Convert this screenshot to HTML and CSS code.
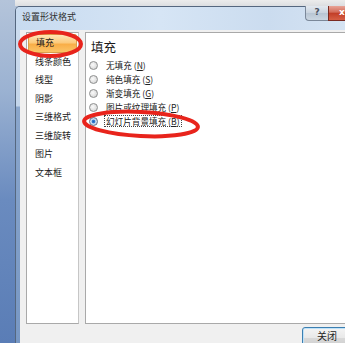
FILE: index.html
```html
<!DOCTYPE html>
<html lang="zh-CN">
<head>
<meta charset="utf-8">
<title>设置形状格式</title>
<link rel="stylesheet" href="styles.css">
</head>
<body>
<div class="screen">
  <div class="top-strip"></div>
  <div class="dialog">
    <div class="titlebar">
      <span class="title">设置形状格式</span>
      <div class="caption-btns">
        <span class="btn-help">?</span>
        <span class="btn-close">x</span>
      </div>
    </div>
    <div class="content">
      <div class="panes">
        <ul class="nav">
          <li class="nav-item selected">填充</li>
          <li class="nav-item">线条颜色</li>
          <li class="nav-item">线型</li>
          <li class="nav-item">阴影</li>
          <li class="nav-item">三维格式</li>
          <li class="nav-item">三维旋转</li>
          <li class="nav-item">图片</li>
          <li class="nav-item">文本框</li>
        </ul>
        <div class="page">
          <div class="heading">填充</div>
          <div class="opt"><span class="radio"></span><span class="lbl">无填充 (<u>N</u>)</span></div>
          <div class="opt"><span class="radio"></span><span class="lbl">纯色填充 (<u>S</u>)</span></div>
          <div class="opt"><span class="radio"></span><span class="lbl">渐变填充 (<u>G</u>)</span></div>
          <div class="opt"><span class="radio"></span><span class="lbl">图片或纹理填充 (<u>P</u>)</span></div>
          <div class="opt"><span class="radio checked"></span><span class="lbl focus">幻灯片背景填充 (<u>B</u>)</span></div>
        </div>
      </div>
      <div class="footer"><span class="btn">关闭</span></div>
    </div>
  </div>
  <svg class="marks" width="345" height="343" viewBox="0 0 345 343">
    <ellipse cx="50.5" cy="44" rx="30.5" ry="12" fill="none" stroke="#e8241c" stroke-width="4"/>
    <ellipse cx="141" cy="124" rx="57" ry="12" fill="none" stroke="#e8241c" stroke-width="4" transform="rotate(3 141 124)"/>
  </svg>
</div>
</body>
</html>
```

FILE: styles.css
```css
* { box-sizing: border-box; }
html, body { margin: 0; padding: 0; }
body {
  width: 345px;
  height: 343px;
  overflow: hidden;
  font-family: "Noto Sans CJK SC", "Noto Sans", sans-serif;
  color: #1e1e1e;
}
.screen {
  position: relative;
  width: 345px;
  height: 343px;
  overflow: hidden;
  background: linear-gradient(to bottom, #b4c4da 0, #9bb2d2 90px, #6a8bbf 200px, #5a7db6 343px);
}
.top-strip {
  height: 6px;
  margin-left: 15px;
  background: linear-gradient(to bottom, #ececec, #dcdee1);
}
.dialog {
  width: 363px;
  height: 360px;
  margin-left: 15px;
  border: 1px solid #55677f;
  border-bottom: none;
  border-radius: 5px 5px 0 0;
  background: linear-gradient(to bottom, #cfdef0 0, #c3d5ea 99px, #8aa6cc 100px, #7797c4 337px);
  display: flex;
  flex-direction: column;
}
.titlebar {
  flex: none;
  height: 23px;
  display: flex;
  align-items: flex-start;
  padding: 4px 13px 0 6px;
  background: linear-gradient(to right, #c8dbf0 0, #d6e5f5 40%, #cbdcef 70%, #d9e6f4 100%);
  border-radius: 4px 4px 0 0;
}
.title {
  font-size: 9px;
  line-height: 12px;
  color: #303030;
}
.caption-btns {
  margin-left: auto;
  margin-top: -5px;
  display: flex;
  height: 15px;
}
.btn-help {
  width: 23px;
  height: 15px;
  border: 1px solid #7b8899;
  border-top: none;
  border-right: none;
  border-radius: 0 0 0 4px;
  background: linear-gradient(to bottom, #e2e8ef, #c9d3de 50%, #b8c5d3 51%, #cbd6e1);
  font-size: 9px;
  line-height: 13px;
  text-align: center;
  color: #4a5260;
  font-family: "DejaVu Sans", sans-serif;
  font-weight: bold;
}
.btn-close {
  width: 36px;
  height: 15px;
  border: 1px solid #7a2b22;
  border-top: none;
  background: linear-gradient(to bottom, #e8a497, #d26a58 45%, #c13d27 50%, #d65f45);
  font-size: 9px;
  line-height: 13px;
  padding-left: 10px;
  color: #fff;
  font-family: "DejaVu Sans", sans-serif;
  font-weight: bold;
}
.content {
  flex: 1;
  margin: 0 4px;
  background: #f0f0f0;
  padding: 2px 0 0 6px;
  display: flex;
  flex-direction: column;
}
.panes {
  flex: none;
  display: flex;
  gap: 6px;
  height: 292px;
  padding-right: 6px;
}
.nav {
  list-style: none;
  margin: 0;
  padding: 1px 0 0 0;
  width: 53px;
  background: #fff;
  border: 1px solid #a9a9a9;
  border-right-color: #c6c6c6;
}
.nav-item {
  height: 18.5px;
  line-height: 18px;
  font-size: 9px;
  padding-left: 8px;
  color: #1a1a1a;
}
.nav-item.selected {
  margin: 0 1px;
  padding-left: 7px;
  border: 1px solid #d9a04a;
  border-radius: 2px;
  background: linear-gradient(to bottom, #fee6b6 0, #fcca7c 45%, #f9ae47 55%, #fbc467 100%);
  line-height: 16px;
}
.page {
  flex: 1;
  background: #fff;
  border: 1px solid #a9a9a9;
  padding-top: 7px;
}
.heading {
  font-size: 12.5px;
  line-height: 14px;
  height: 14px;
  padding-left: 5px;
  margin-bottom: 4px;
  color: #1a1a1a;
}
.opt {
  height: 14px;
  display: flex;
  align-items: center;
  gap: 6px;
  padding-left: 3px;
}
.radio {
  width: 9px;
  height: 9px;
  border-radius: 50%;
  border: 1px solid #8e8f8f;
  background: radial-gradient(circle at 40% 40%, #fafafa 0, #e2e2e2 55%, #c9c9c9 100%);
  flex: none;
}
.radio.checked {
  border-color: #5b6f86;
  background: radial-gradient(circle at 50% 50%, #1d5fb8 0, #3d85d6 35%, #b9d2ee 42%, #e8eef5 100%);
}
.lbl {
  font-size: 8.6px;
  line-height: 10px;
  color: #222;
  padding: 0 1px;
  border: 1px solid transparent;
}
.lbl.focus {
  border: 1px dotted #444;
}
.lbl u { text-decoration: underline; }
.footer {
  display: flex;
  justify-content: flex-end;
  padding-top: 3px;
  padding-right: 21px;
}
.btn {
  width: 50px;
  height: 21px;
  border: 1px solid #3c7fb1;
  border-radius: 3px;
  box-shadow: inset 0 0 0 1px #bfe2f9;
  background: linear-gradient(to bottom, #f4f4f4, #e9e9e9 50%, #d9d9d9 51%, #cfcfcf);
  font-size: 10px;
  line-height: 16px;
  text-align: center;
  color: #1e1e1e;
}
.marks {
  position: absolute;
  left: 0;
  top: 0;
  pointer-events: none;
}
```
